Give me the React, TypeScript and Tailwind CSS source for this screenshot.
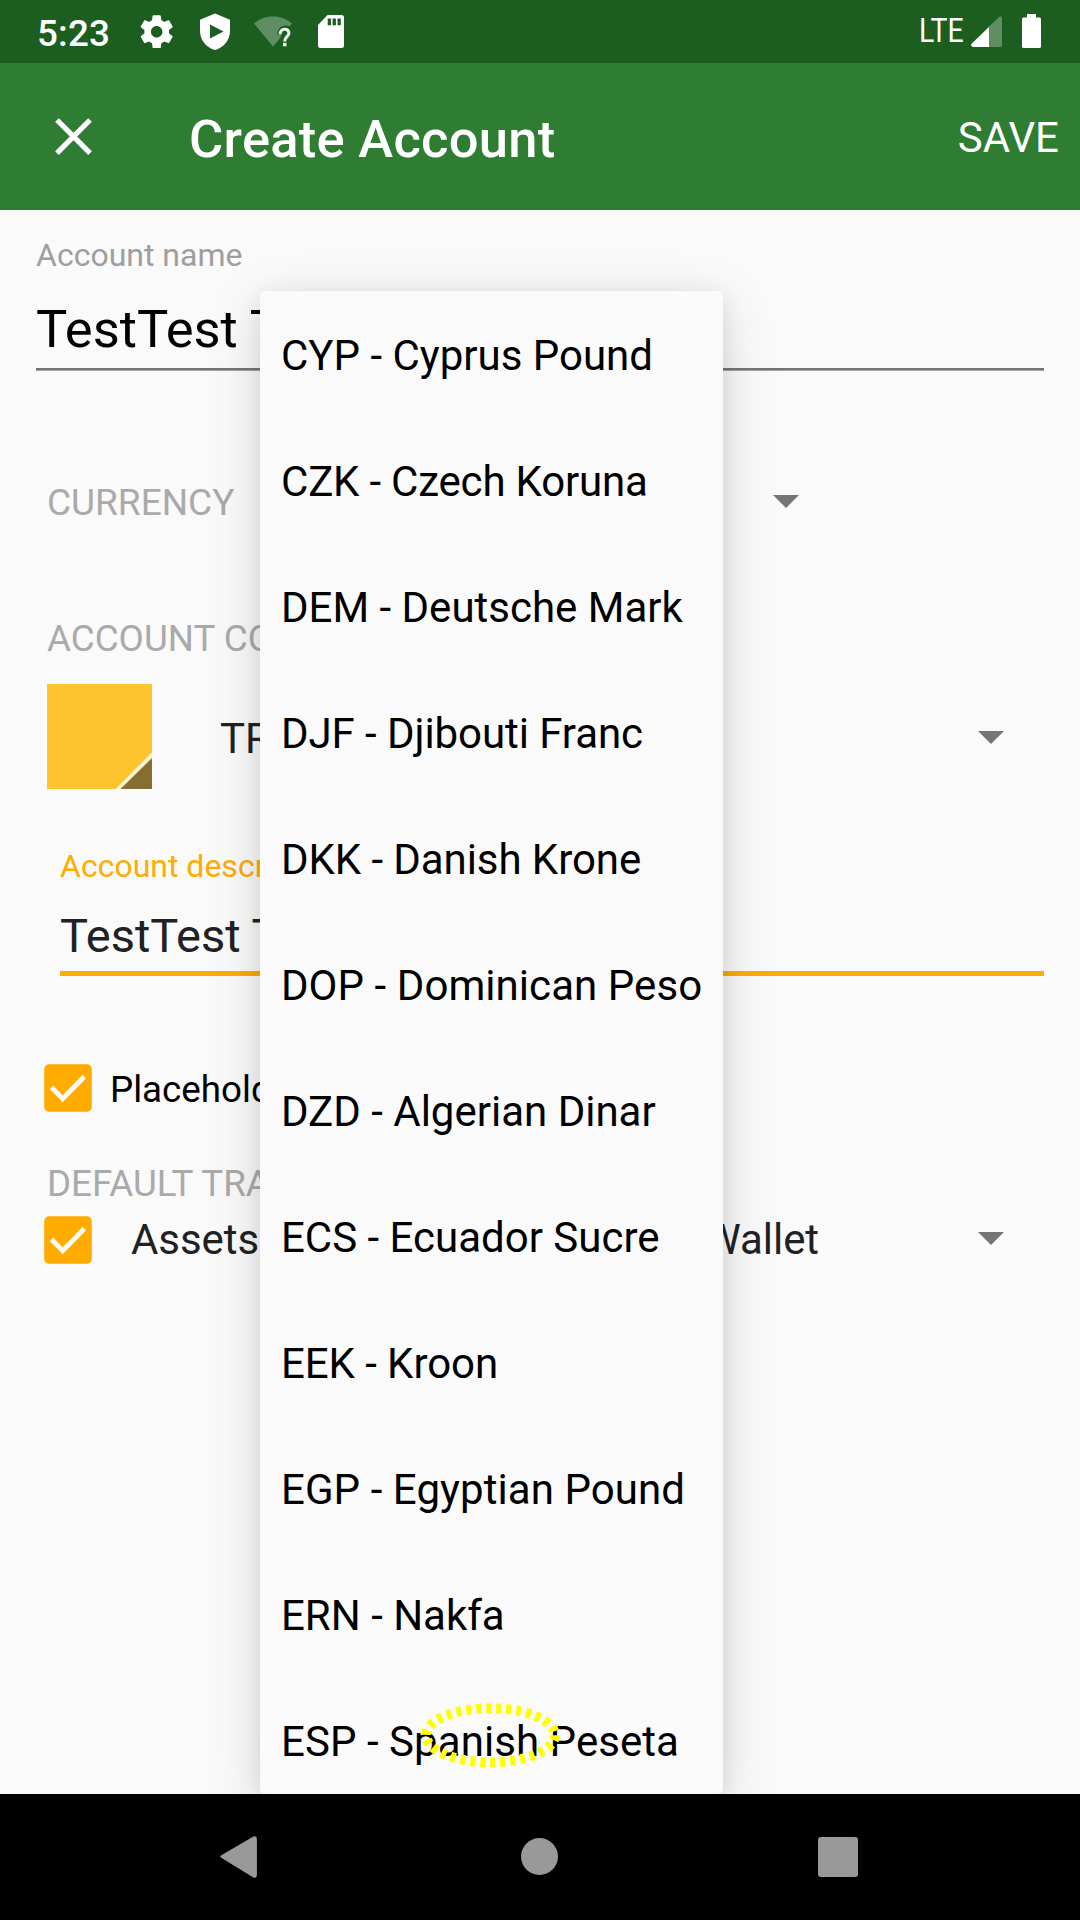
import React from 'react';

const currencies = [
  { name: 'CYP - Cyprus Pound', tracking: '' },
  { name: 'CZK - Czech Koruna', tracking: 'tracking-[-0.2px]' },
  { name: 'DEM - Deutsche Mark', tracking: '' },
  { name: 'DJF - Djibouti Franc', tracking: 'tracking-[-0.07px]' },
  { name: 'DKK - Danish Krone', tracking: 'tracking-[-0.07px]' },
  { name: 'DOP - Dominican Peso', tracking: 'tracking-[0.06px]' },
  { name: 'DZD - Algerian Dinar', tracking: '' },
  { name: 'ECS - Ecuador Sucre', tracking: '' },
  { name: 'EEK - Kroon', tracking: 'tracking-[-0.07px]' },
  { name: 'EGP - Egyptian Pound', tracking: 'tracking-[0.07px]' },
  { name: 'ERN - Nakfa', tracking: '' },
  { name: 'ESP - Spanish Peseta', tracking: 'tracking-[0.06px]' },
];

function Caret({ className = '' }: { className?: string }) {
  return (
    <svg className={'h-[13px] w-[26px] shrink-0 ' + className} viewBox="0 0 26 13">
      <path d="M0 0H26L13 13Z" fill="#757575" />
    </svg>
  );
}

function Checkbox() {
  return (
    <svg className="h-12 w-12 shrink-0" viewBox="0 0 48 48">
      <rect x="0.2" y="0.2" width="47.6" height="47.6" rx="5" fill="#ffab00" />
      <path d="M7.5 23.2L18.7 34.7L40.4 12.4" fill="none" stroke="#fafafa" strokeWidth="5" />
    </svg>
  );
}

function StatusBar() {
  return (
    <div className="flex h-[63px] items-start bg-[#1b5e20] pl-[37px] text-white">
      <span className="mt-[12px] w-[103px] text-[36.75px] leading-[43px] font-medium tracking-[0.15px]">5:23</span>
      <svg className="mt-3 h-[39.4px] w-[39.4px] -ml-[3px] shrink-0" viewBox="0 0 24 24" fill="#fff">
        <path d="M19.43 12.98c.04-.32.07-.64.07-.98s-.03-.66-.07-.98l2.11-1.65c.19-.15.24-.42.12-.64l-2-3.46c-.12-.22-.39-.3-.61-.22l-2.49 1c-.52-.4-1.08-.73-1.69-.98l-.38-2.65C14.46 2.18 14.25 2 14 2h-4c-.25 0-.46.18-.49.42l-.38 2.65c-.61.25-1.17.59-1.69.98l-2.49-1c-.23-.09-.49 0-.61.22l-2 3.46c-.13.22-.07.49.12.64l2.11 1.65c-.04.32-.07.65-.07.98s.03.66.07.98l-2.11 1.65c-.19.15-.24.42-.12.64l2 3.46c.12.22.39.3.61.22l2.49-1c.52.4 1.08.73 1.69.98l.38 2.65c.03.24.24.42.49.42h4c.25 0 .46-.18.49-.42l.38-2.65c.61-.25 1.17-.59 1.69-.98l2.49 1c.23.09.49 0 .61-.22l2-3.46c.12-.22.07-.49-.12-.64l-2.11-1.65zM12 15.5c-1.93 0-3.5-1.57-3.5-3.5s1.57-3.5 3.5-3.5 3.5 1.57 3.5 3.5-1.57 3.5-3.5 3.5z" />
      </svg>
      <svg className="mt-[13px] ml-[23.6px] h-[37px] w-[30px] shrink-0" viewBox="0 0 30 37">
        <path
          fillRule="evenodd"
          fill="#fff"
          d="M15 0.6L30 6.7V18C30 27 23.5 34.8 15 37C6.5 34.8 0 27 0 18V6.7ZM10 11.5V25.5L23.5 18.5Z"
        />
      </svg>
      <svg className="mt-[14px] ml-6 h-[36px] w-[40px] shrink-0" viewBox="0 0 40 36">
        <path
          d="M0 9.5C5.5 5 11.8 2.5 19 2.5S32.5 5 38 9.5L35.5 12.2C30 9.8 23.5 13 23.3 20.5H27.5L26.5 23.5L19 32.6Z"
          fill="#fff"
          fillOpacity=".3"
        />
        <path
          d="M26.2 20.2C26.2 16.8 28 15.2 30.6 15.2C33.2 15.2 34.9 16.8 34.9 19.2C34.9 22.3 30.7 22.8 30.7 27.6"
          fill="none"
          stroke="#eef3ee"
          strokeWidth="3"
        />
        <rect x="29" y="28.8" width="3.5" height="3.5" fill="#eef3ee" />
      </svg>
      <svg className="mt-[15px] ml-6 h-[33px] w-[26px] shrink-0" viewBox="0 0 26 33">
        <path
          fillRule="evenodd"
          fill="#fff"
          d="M9.5 0H23.5Q26 0 26 2.5V30.5Q26 33 23.5 33H2.5Q0 33 0 30.5V10ZM9.7 3.5V10.2H13V3.5ZM14.6 3.5V10.2H17.9V3.5ZM19.5 3.5V10.2H22.8V3.5Z"
        />
      </svg>
      <span className="mt-[11px] ml-auto w-[50px] shrink-0 origin-left scale-x-[0.875] text-[32.5px] leading-[40px]">LTE</span>
      <svg className="mt-4 ml-[2px] h-[31px] w-[31px] shrink-0" viewBox="0 0 31 31">
        <path d="M2 31Q0 31 0 29V28L28 1Q31 -1 31 3V29Q31 31 29 31Z" fill="#fff" fillOpacity=".3" />
        <path d="M2 31Q-0.5 30 0.5 28L18 11V31Z" fill="#fff" />
      </svg>
      <svg className="mt-[14px] mr-[39px] ml-5 h-[34px] w-[19px] shrink-0" viewBox="0 0 19 34">
        <path d="M5 0H14V3.5H17.5Q19 3.5 19 5V32.5Q19 34 17.5 34H1.5Q0 34 0 32.5V5Q0 3.5 1.5 3.5H5Z" fill="#fff" />
      </svg>
    </div>
  );
}

function Toolbar() {
  return (
    <header className="flex h-[147px] items-center bg-[#2e7d32] pl-[42px] pr-[21px] text-white">
      <svg className="h-[63px] w-[63px] shrink-0" viewBox="0 0 24 24" fill="#fff">
        <path d="M19 6.41L17.59 5 12 10.59 6.41 5 5 6.41 10.59 12 5 17.59 6.41 19 12 13.41 17.59 19 19 17.59 13.41 12z" />
      </svg>
      <h1 className="mt-[5px] ml-[84px] text-[52.5px] leading-[60px] font-medium tracking-[0.27px] whitespace-nowrap">Create Account</h1>
      <button className="mt-[2px] ml-auto text-[42px] leading-[50px]">SAVE</button>
    </header>
  );
}

function CurrencyMenu() {
  return (
    <div className="absolute top-[291px] left-[260px] h-[1503px] w-[463px] rounded-[5px] bg-[#fafafa] shadow-[0_14px_60px_rgba(0,0,0,0.13),0_5px_24px_rgba(0,0,0,0.09)]">
      <ul className="h-full overflow-hidden rounded-[5px]">
        {currencies.map((c) => (
          <li
            key={c.name}
            className={'h-[126px] pt-[2px] pl-[21px] text-[42px] leading-[126px] whitespace-nowrap text-black ' + c.tracking}
          >
            {c.name}
          </li>
        ))}
      </ul>
      <svg className="absolute top-[1410px] left-[160px] h-[68px] w-[142px]" viewBox="0 0 142 68">
        <ellipse cx="70.5" cy="34.3" rx="64.5" ry="27" fill="none" stroke="#ffff00" strokeWidth="10" strokeDasharray="5.1 4.9" />
      </svg>
    </div>
  );
}

export default function App() {
  return (
    <div className="relative flex h-[1920px] w-[1080px] flex-col overflow-hidden bg-[#fafafa] font-['Roboto',sans-serif]">
      <StatusBar />
      <Toolbar />
      <main className="flex flex-1 flex-col whitespace-nowrap">
        <label className="mt-[25px] ml-9 text-[32px] leading-[40px] text-[#9e9e9e]">Account name</label>
        <div className="mt-[24px] mr-9 ml-9 h-[72px] text-[52.5px] leading-[60px] text-black">
          <div>TestTest Test</div>
          <div className="mt-[9px] h-[3px] border-b border-[#a3a3a3] bg-[#757575]" />
        </div>
        <div className="mt-[110px] flex h-11 items-center pr-[280.6px] pl-[47px]">
          <span className="text-[37px] leading-[44px] text-[#aaaaaa]">CURRENCY</span>
          <Caret className="-mt-[3px] ml-auto" />
        </div>
        <div className="mt-[92px] ml-[47px] text-[36.75px] leading-[44px] text-[#aaaaaa]">ACCOUNT COLOR</div>
        <div className="mt-[23px] flex h-[105px] items-center pr-[75.6px] pl-[47px]">
          <svg className="h-[105px] w-[105px] shrink-0" viewBox="0 0 105 105">
            <rect width="105" height="105" fill="#fec52e" />
            <path d="M105 68.5V105H68.5Z" fill="#fff3d0" />
            <path d="M105 74V105H73.5Z" fill="#866d31" />
          </svg>
          <span className="mt-[4px] ml-[68px] text-[42px] leading-[50px] text-[#212121]">TRADING</span>
          <Caret className="mt-[2px] ml-auto" />
        </div>
        <label className="mt-[57px] ml-[60px] text-[32px] leading-[40px] text-[#ffab00]">Account description</label>
        <div className="mt-[20px] mr-9 ml-[60px] text-[47px] leading-[60px] text-[#212121]">
          <div>TestTest Test</div>
          <div className="mt-[5px] h-[5px] bg-[#ffab00]" />
        </div>
        <div className="mt-[88px] flex h-12 items-center pl-11">
          <Checkbox />
          <span className="mt-[4px] ml-[18px] text-[36.75px] leading-[44px] text-black">Placeholder account</span>
        </div>
        <div className="mt-[50px] ml-[47px] text-[36.75px] leading-[44px] text-[#aaaaaa]">DEFAULT TRANSFER ACCOUNT</div>
        <div className="mt-[10px] flex h-12 items-center pr-[75.6px] pl-11">
          <Checkbox />
          <span className="ml-[39px] text-[42px] leading-[48px] tracking-[-0.07px] text-[#212121]">Assets:Current Assets:Cash in Wallet</span>
          <Caret className="-mt-[3px] ml-auto" />
        </div>
      </main>
      <CurrencyMenu />
      <nav className="relative flex h-[126px] shrink-0 bg-black pl-[220px]">
        <svg className="mt-[42px] h-[42px] w-[37px]" viewBox="0 0 37 42">
          <path d="M34 1.5L1.5 20.5L34 40.5Q35.7 41 35.7 39V3Q35.7 1 34 1.5Z" fill="#999" stroke="#999" strokeWidth="2.4" strokeLinejoin="round" />
        </svg>
        <div className="mt-11 ml-[264px] h-[37px] w-[37px] rounded-full bg-[#999999]" />
        <div className="mt-[43px] ml-[260px] h-10 w-10 rounded-[3px] bg-[#999999]" />
      </nav>
    </div>
  );
}
